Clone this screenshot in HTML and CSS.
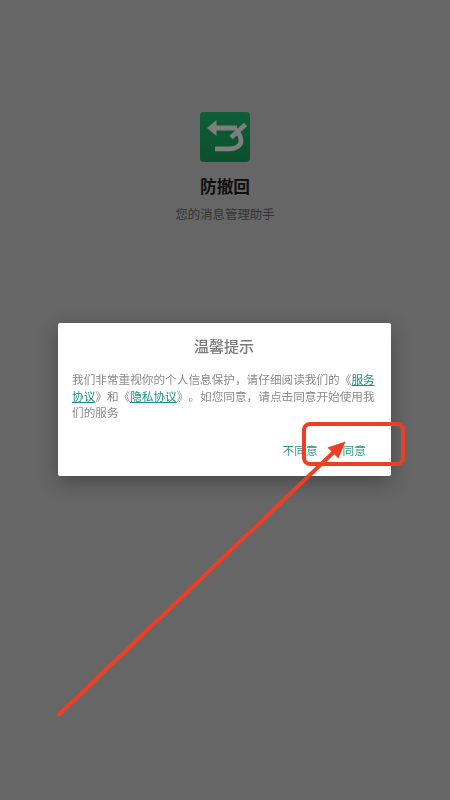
FILE: index.html
```html
<!DOCTYPE html>
<html lang="zh">
<head>
<meta charset="utf-8">
<title>防撤回</title>
<link rel="stylesheet" href="styles.css">
</head>
<body>
<main class="splash">
  <svg class="logo" viewBox="0 0 50 50" aria-hidden="true">
    <defs>
      <linearGradient id="logoBg" x1="0" y1="0" x2="0" y2="1">
        <stop offset="0" stop-color="#0f5e37"/>
        <stop offset="1" stop-color="#0c4f2e"/>
      </linearGradient>
    </defs>
    <rect width="50" height="50" rx="4" fill="url(#logoBg)"/>
    <path d="M7 16 L16.500 8 V24 Z" fill="#7e7e7e"/>
    <path d="M15 16 H37 M15 36.800 H30 C37 36.800 41 33 41 28 C41 25 40 23 38 20.500 M45.500 12.500 L31 25.500" fill="none" stroke="#7e7e7e" stroke-width="4.800"/>
  </svg>
  <h1 class="name">防撤回</h1>
  <p class="tagline">您的消息管理助手</p>
</main>
<div class="overlay">
  <section class="dialog">
    <h2 class="dialog-title">温馨提示</h2>
    <p class="dialog-body">我们非常重视你的个人信息保护，请仔细阅读我们的《<a class="link">服务协议</a>》和《<a class="link">隐私协议</a>》。如您同意，请点击同意开始使用我们的服务</p>
    <div class="actions">
      <button class="action">不同意</button>
      <button class="action">同意</button>
    </div>
  </section>
</div>
<svg class="annotation" viewBox="0 0 450 800" aria-hidden="true">
  <rect x="304" y="424" width="99" height="40" rx="6" fill="none" stroke="#ee3f24" stroke-width="4"/>
  <path d="M59 714.500 L337 449" fill="none" stroke="#ee3f24" stroke-width="4" stroke-linecap="round"/>
  <path d="M345.500 441.500 L327.500 447.500 L338.500 458.500 Z" fill="#ee3f24"/>
</svg>
</body>
</html>
```
FILE: styles.css
```css
* { box-sizing: border-box; }
html, body { margin: 0; height: 100%; }
body {
  width: 450px;
  height: 800px;
  overflow: hidden;
  background: #666666;
  font-family: "Roboto", "Noto Sans CJK SC", sans-serif;
  text-spacing-trim: space-all;
}
.splash {
  display: flex;
  flex-direction: column;
  align-items: center;
  padding-top: 112px;
}
.logo { width: 50px; height: 50px; display: block; }
.name {
  margin: 15px 0 0;
  font-size: 16.700px;
  line-height: 22px;
  font-weight: 700;
  color: #0f0f0f;
}
.tagline {
  margin: 7px 0 0;
  font-size: 12.400px;
  line-height: 17px;
  color: #333333;
}
.overlay {
  position: fixed;
  inset: 0;
  display: flex;
  align-items: center;
  padding-left: 58px;
  padding-bottom: 1px;
}
.dialog {
  width: 333px;
  height: 153px;
  padding: 14px 15px 0 14px;
  background: #ffffff;
  border-radius: 2px;
  box-shadow: 0 6px 20px rgba(0, 0, 0, 0.3);
}
.dialog-title {
  margin: 0;
  text-align: center;
  font-size: 15px;
  line-height: 21px;
  font-weight: 500;
  color: #7a7a7a;
}
.dialog-body {
  margin: 14px 0 0;
  font-size: 11.650px;
  line-height: 16.500px;
  color: #8a8a8a;
}
.link {
  color: #1a9080;
  text-decoration: underline;
}
.actions {
  display: flex;
  justify-content: flex-end;
  gap: 25px;
  margin-top: 21px;
  padding-right: 10px;
}
.action {
  padding: 0;
  border: 0;
  background: none;
  font: inherit;
  font-size: 11.700px;
  line-height: 16px;
  color: #2b9688;
}
.annotation {
  position: fixed;
  inset: 0;
  width: 450px;
  height: 800px;
}
```
